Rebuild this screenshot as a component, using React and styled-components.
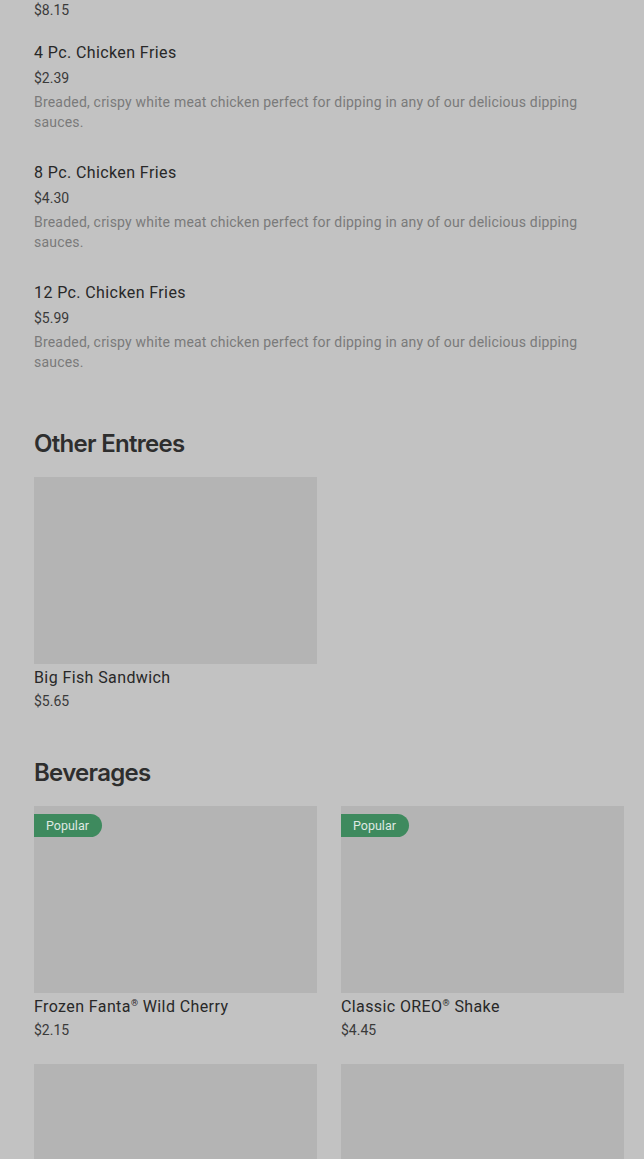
import React from "react";
import styled, { createGlobalStyle } from "styled-components";

const GlobalStyle = createGlobalStyle`
    html, body {
        margin: 0;
        padding: 0;
        background: #c2c2c2;
    }
    body {
        font-family: Roboto, "Liberation Sans", sans-serif;
        color: #333333;
    }
`;

const friesDesc = "Breaded, crispy white meat chicken perfect for dipping in any of our delicious dipping sauces.";

const fries = [
    { name: "4 Pc. Chicken Fries", price: "$2.39", desc: friesDesc },
    { name: "8 Pc. Chicken Fries", price: "$4.30", desc: friesDesc },
    { name: "12 Pc. Chicken Fries", price: "$5.99", desc: friesDesc },
];

const beverages = [
    { name: ["Frozen Fanta", " Wild Cherry"], price: "$2.15", popular: true },
    { name: ["Classic OREO", " Shake"], price: "$4.45", popular: true },
    { name: null, price: "" },
    { name: null, price: "" },
];

const App = () => {
    return (
        <>
            <GlobalStyle />
            <Page>
                <List>
                    <Item>
                        <Price>$8.15</Price>
                    </Item>
                    {fries.map((item) => (
                        <Item key={item.name}>
                            <ItemName>{item.name}</ItemName>
                            <Price>{item.price}</Price>
                            <Desc>{item.desc}</Desc>
                        </Item>
                    ))}
                </List>

                <Section>
                    <Heading>Other Entrees</Heading>
                    <Grid>
                        <Card>
                            <Photo />
                            <CardName>Big Fish Sandwich</CardName>
                            <CardPrice>$5.65</CardPrice>
                        </Card>
                    </Grid>
                </Section>

                <Section $gap={46}>
                    <Heading>Beverages</Heading>
                    <Grid>
                        {beverages.map((b, i) => (
                            <Card key={i}>
                                <Photo>
                                    {b.popular && <Badge>Popular</Badge>}
                                </Photo>
                                {b.name && (
                                    <CardName>
                                        {b.name[0]}<Reg>®</Reg>{b.name[1]}
                                    </CardName>
                                )}
                                {b.price && <CardPrice>{b.price}</CardPrice>}
                            </Card>
                        ))}
                    </Grid>
                </Section>
            </Page>
        </>
    );
};

const Page = styled.div`
    padding: 0 20px 0 34px;
    height: 1159px;
    overflow: hidden;
`;

const List = styled.div`
    display: flex;
    flex-direction: column;
    gap: 23px;
`;

const Item = styled.div`
    display: flex;
    flex-direction: column;
`;

const ItemName = styled.div`
    font-size: 16px;
    line-height: 20px;
    font-weight: 400;
    letter-spacing: 0.4px;
    color: #282828;
    margin-bottom: 5px;
`;

const Price = styled.div`
    font-size: 14px;
    line-height: 20px;
    color: #3a3a3a;
`;

const Desc = styled.div`
    font-size: 14px;
    line-height: 20px;
    letter-spacing: 0.2px;
    color: #7a7a7a;
    margin-top: 4px;
    margin-bottom: 8px;
    max-width: 570px;
`;

const Section = styled.section`
    margin-top: ${(p) => p.$gap ?? 48}px;
`;

const Heading = styled.h2`
    margin: 0 0 17px;
    font-family: Inter, "Liberation Sans", sans-serif;
    font-size: 24px;
    line-height: 32px;
    font-weight: 600;
    letter-spacing: -0.7px;
    color: #2e2e2e;
`;

const Grid = styled.div`
    display: grid;
    grid-template-columns: 283px 283px;
    gap: 24px;
`;

const Card = styled.div`
    display: flex;
    flex-direction: column;
`;

const Photo = styled.div`
    position: relative;
    height: 187px;
    background: #b4b4b4;
`;

const Badge = styled.span`
    position: absolute;
    top: 8px;
    left: 0;
    height: 23px;
    padding: 0 13px 0 12px;
    display: flex;
    align-items: center;
    background: #3e8a5e;
    color: #dfe8e2;
    font-size: 12.5px;
    border-radius: 0 12px 12px 0;
`;

const CardName = styled.div`
    margin-top: 4px;
    font-size: 16px;
    line-height: 20px;
    font-weight: 400;
    letter-spacing: 0.4px;
    color: #282828;
`;

const Reg = styled.sup`
    font-size: 9px;
    line-height: 0;
    vertical-align: 6px;
`;

const CardPrice = styled.div`
    margin-top: 3px;
    font-size: 14px;
    line-height: 20px;
    color: #3a3a3a;
`;

export default App;
